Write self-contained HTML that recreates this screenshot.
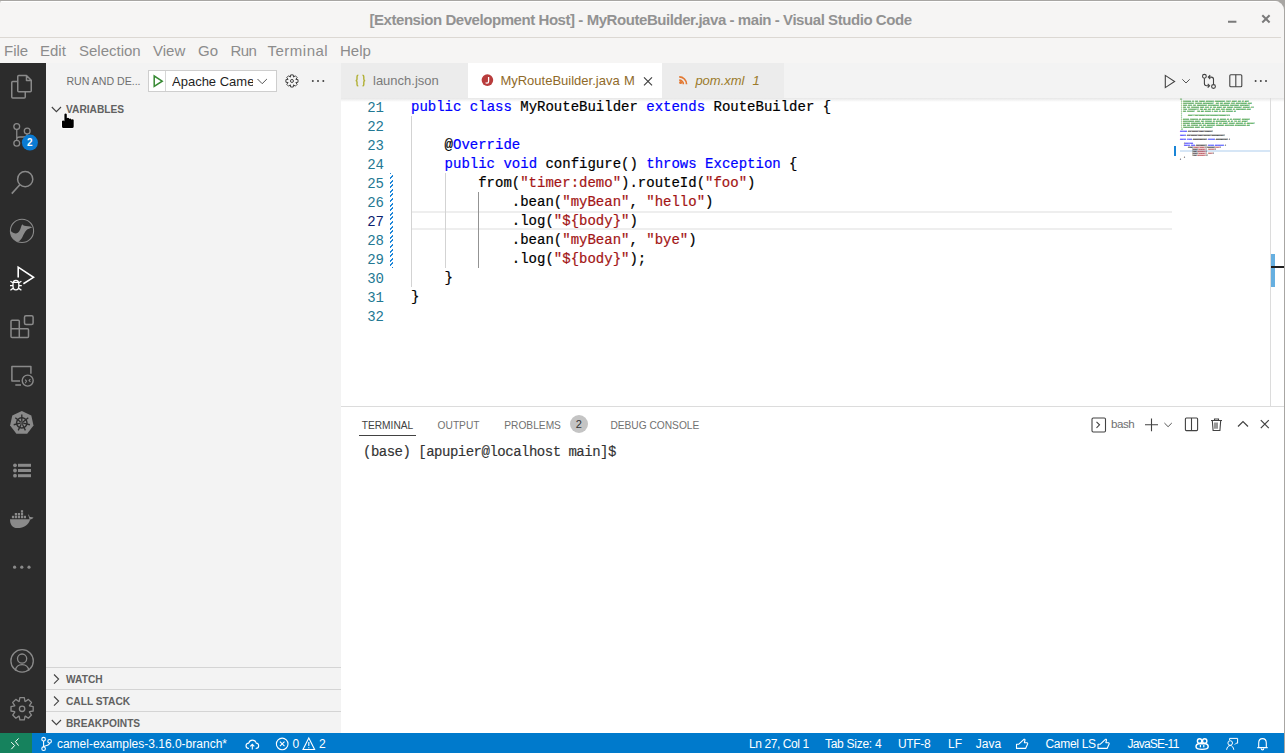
<!DOCTYPE html>
<html><head><meta charset="utf-8">
<style>
*{box-sizing:border-box;margin:0;padding:0}
html,body{width:1285px;height:753px;overflow:hidden;background:#a8a6a3}
body{font-family:"Liberation Sans",sans-serif;position:relative}
.a{position:absolute}
svg{position:absolute;overflow:visible}
#win{left:0;top:1px;width:1284px;height:752px;background:#f6f5f4;border-radius:2px 9px 0 0;overflow:hidden}
#title{left:0;top:0;width:1281px;height:37px;border-bottom:1px solid #dcd8d3;text-align:center;color:#929292;font-weight:bold;font-size:15px;letter-spacing:-0.44px;line-height:37px}
#menu{left:0;top:37px;width:1285px;height:25px;color:#8c8c8c;font-size:15px}
#menu span{position:absolute;top:4px;white-space:nowrap}
#act{left:0;top:62px;width:46px;height:670px;background:#2c2c2c}
#side{left:46px;top:62px;width:295px;height:670px;background:#f3f3f3}
#tabs{left:341px;top:62px;width:944px;height:35px;background:#f3f3f3}
#editor{left:341px;top:97px;width:944px;height:309px;background:#fff;overflow:hidden}
#panel{left:341px;top:405px;width:944px;height:327px;background:#fff;border-top:1px solid #dcdcdc}
#status{left:0;top:732px;width:1285px;height:20px;background:#007acc;color:#fff;font-size:12px}
#status span{position:absolute;top:3px;white-space:nowrap}
.code{font-family:"Liberation Mono",monospace;font-size:14px;line-height:19px;white-space:pre;color:#000;-webkit-text-stroke:0.2px currentColor}
.ln{position:absolute;left:0;width:43px;text-align:right;color:#237893;font-family:"Liberation Mono",monospace;font-size:14px;line-height:19px}
.k{color:#0000ff}
.s{color:#a31515}
.hd{font-size:10.2px;font-weight:bold;color:#616161;position:absolute;left:20px;white-space:nowrap}
.sec{position:absolute;left:0;width:295px;height:22px;border-top:1px solid #d4d4d4}
.tab{position:absolute;top:0;height:35px;font-size:13px;line-height:35px;white-space:nowrap}
.ptab{position:absolute;top:11px;font-size:10.2px;color:#717171;white-space:nowrap}
</style></head><body>
<div id="win" class="a">
  <div class="a" style="left:0;top:0;width:1284px;height:1px;background:#fff"></div>
  <div id="title" class="a">[Extension Development Host] - MyRouteBuilder.java - main - Visual Studio Code</div>
  <!-- window controls -->
  <svg style="left:0;top:0" width="1284" height="37" viewBox="0 1 1284 37"><path d="M1228 21.7h8.4" stroke="#7a7a7a" stroke-width="2"/><path d="M1262.3 15.2l7.3 7.3M1269.6 15.2l-7.3 7.3" stroke="#7a7a7a" stroke-width="2"/></svg>
  <div id="menu" class="a">
    <span style="left:4px">File</span><span style="left:40px">Edit</span><span style="left:79px">Selection</span><span style="left:153px">View</span><span style="left:198px">Go</span><span style="left:230.5px;letter-spacing:-0.6px">Run</span><span style="left:267.5px;letter-spacing:0.5px">Terminal</span><span style="left:340px">Help</span>
  </div>

  <div id="act" class="a">
   <svg style="left:0;top:0" width="46" height="670" viewBox="0 63 46 670">
    <g fill="none" stroke="#8a8a8a" stroke-width="1.5" stroke-linejoin="round">
     <!-- explorer -->
     <path d="M17.75 76.5a1 1 0 0 1 1-1H26.5L31.25 80.25V90.75a1 1 0 0 1-1 1H18.75a1 1 0 0 1-1-1Z M26.5 75.5V80.5H31.25"/>
     <path d="M17.75 81.5H12.75a1 1 0 0 0-1 1V97a1 1 0 0 0 1 1H24.25a1 1 0 0 0 1-1V92"/>
     <!-- scm -->
     <circle cx="16.75" cy="126.6" r="2.9" stroke-width="1.3"/>
     <circle cx="27.2" cy="131.1" r="2.9" stroke-width="1.3"/>
     <circle cx="16.75" cy="143.3" r="2.9" stroke-width="1.3"/>
     <path d="M16.75 129.5V140.4 M16.75 139C16.75 137.5 18 137 20 137H23C25.5 137 27.2 136 27.2 134" stroke-width="1.3"/>
     <!-- search -->
     <circle cx="25.2" cy="179.2" r="7.6" stroke-width="1.5"/>
     <path d="M19.8 184.8L11.8 193.6" stroke-width="1.6"/>
     <!-- camel -->
     <circle cx="22" cy="230.9" r="11.6" stroke-width="1.1"/>
     <!-- extensions -->
     <path d="M12 320.3H18.3Q19.3 320.3 19.3 321.3V328.7H27.5Q28.5 328.7 28.5 329.7V336.6Q28.5 337.6 27.5 337.6H12Q11 337.6 11 336.6V321.3Q11 320.3 12 320.3Z M11 328.7H19.3V337.6"/>
     <rect x="24.5" y="315.8" width="8.6" height="8.8" rx="1.5"/>
     <!-- remote -->
     <path d="M30.9 373.8V366.4H11.9V381H20 M15.3 384.9H21"/>
     <circle cx="27.7" cy="380.6" r="5.5" stroke-width="1.4"/>
     <path d="M25.2 379.6l1.3 1.6-1.3 2 M30.4 379.2l-1.4 1.2 1.4 1.4" stroke-width="1.1"/>
     <!-- account -->
     <circle cx="22.1" cy="660.9" r="11.2" stroke-width="1.3"/>
     <circle cx="22.1" cy="658.6" r="4.6" stroke-width="1.3"/>
     <path d="M15.3 670.6C16 666.5 18.8 664.6 22.1 664.6S28.2 666.5 28.9 670.6" stroke-width="1.3"/>
     <!-- gear -->
     <path d="M29.56 705.90 L33.18 706.60 L33.18 711.00 L29.56 711.70 L29.42 712.02 L31.49 715.08 L28.38 718.19 L25.32 716.12 L25.00 716.26 L24.30 719.88 L19.90 719.88 L19.20 716.26 L18.88 716.12 L15.82 718.19 L12.71 715.08 L14.78 712.02 L14.64 711.70 L11.02 711.00 L11.02 706.60 L14.64 705.90 L14.78 705.58 L12.71 702.52 L15.82 699.41 L18.88 701.48 L19.20 701.34 L19.90 697.72 L24.30 697.72 L25.00 701.34 L25.32 701.48 L28.38 699.41 L31.49 702.52 L29.42 705.58 Z" stroke-width="1.3"/>
     <circle cx="22.1" cy="708.8" r="2.7" stroke-width="1.3"/>
    </g>
    <!-- camel fill -->
    <path fill="#8a8a8a" d="M10.4 230C11 231.8 13 233.4 15.5 233.4C17.5 233.4 19 232.5 20.2 229.5C21 227.5 21.4 225.5 22.3 224.3L23.2 225.3C24.5 226 27 226.3 30.4 226.6L32.3 227.5C30 228.2 27.8 228.9 26.4 230.3C24.6 232.3 23.6 234.6 22.6 236.8C21.6 238.8 20.2 240.6 18.3 241.8C15 241 12.5 238.6 11.2 235.5C10.6 233.8 10.4 232 10.4 230Z"/>
    <!-- debug (active) -->
    <g fill="none" stroke="#fff" stroke-width="1.6" stroke-linejoin="miter">
     <path d="M18.2 277.6V267.2L33.5 277.35L23.4 283.7"/>
     <path d="M13 284a2.9 3.6 0 0 1 5.8 0v2.2a2.9 3.6 0 0 1-5.8 0z M13 282.3H18.8 M10.4 281.2l2.6 1.6 M21.4 281.2l-2.6 1.6 M10 285.6h3 M21.8 285.6h-3 M10.4 290.2l2.6-1.8 M21.4 290.2l-2.6-1.8" stroke-width="1.3"/>
    </g>
    <!-- kubernetes -->
    <path fill="#8a8a8a" d="M21.8 411L31.3 415.5L33.5 425.4L27.2 433.8H16.4L10.1 425.4L12.3 415.5Z"/>
    <g stroke="#2c2c2c" fill="none">
     <circle cx="21.8" cy="422.9" r="5.2" stroke-width="1.5"/>
     <path d="M21.80 421.40L21.80 414.60M22.97 421.96L28.29 417.73M23.26 423.23L29.89 424.75M22.45 424.25L25.40 430.38M21.15 424.25L18.20 430.38M20.34 423.23L13.71 424.75M20.63 421.96L15.31 417.73" stroke-width="1.3"/>
    </g>
    <circle cx="21.8" cy="422.9" r="1.3" fill="#2c2c2c"/><circle cx="21.8" cy="422.9" r="0.6" fill="#8a8a8a"/>
    <!-- list -->
    <g fill="#8a8a8a">
     <circle cx="15" cy="465.3" r="1.9"/><circle cx="15" cy="470.5" r="1.9"/><circle cx="15" cy="475.7" r="1.9"/>
     <rect x="18" y="463.8" width="13" height="3"/><rect x="18" y="469" width="13" height="3"/><rect x="18" y="474.2" width="13" height="3"/>
    </g>
    <!-- docker -->
    <g fill="#8a8a8a">
     <path d="M10 519.2H30.2C28.7 524.5 24 528.1 17.3 528.1C12.5 528.1 10 524.5 10 519.2Z"/>
     <path d="M28 514.2C29 514.9 29.6 516 29.8 517C31 516.8 32.5 516.9 33.5 517.6C32.5 519 31 519.6 29.6 519.6Z"/>
     <rect x="11.9" y="515.8" width="2.2" height="2.4"/><rect x="14.8" y="515.8" width="2.2" height="2.4"/><rect x="17.8" y="515.8" width="2.2" height="2.4"/><rect x="20.9" y="515.8" width="2.2" height="2.4"/><rect x="23.8" y="515.8" width="2.2" height="2.4"/>
     <rect x="14.8" y="513" width="2.2" height="2.4"/><rect x="17.8" y="513" width="2.2" height="2.4"/><rect x="20.9" y="513" width="2.2" height="2.4"/>
     <rect x="20.9" y="510.2" width="2.2" height="2.4"/>
    </g>
    <!-- dots -->
    <g fill="#8a8a8a"><circle cx="14.6" cy="567.2" r="1.6"/><circle cx="21.8" cy="567.2" r="1.6"/><circle cx="29" cy="567.2" r="1.6"/></g>
    <!-- scm badge -->
    <circle cx="29.9" cy="142.6" r="8" fill="#0a7bd3"/>
    <text x="29.9" y="146.1" fill="#fff" font-size="10" font-weight="bold" text-anchor="middle" font-family="Liberation Sans">2</text>
   </svg>
  </div>

  <div id="side" class="a">
   <div class="a" style="left:20.4px;top:12.9px;font-size:10.6px;line-height:1;color:#6f6f6f;white-space:nowrap">RUN AND DE...</div>
   <div class="a" style="left:102px;top:7px;width:129px;height:22px;background:#fff;border:1px solid #cecece"></div>
   <div class="a" style="left:119px;top:8px;width:1px;height:20px;background:#d6d6d6"></div>
   <div class="a" style="left:126px;top:11.8px;width:81px;height:16px;overflow:hidden;font-size:13px;line-height:1;color:#1f1f1f;white-space:nowrap">Apache Camel</div>
   <svg style="left:0;top:0" width="295" height="670" viewBox="46 63 295 670">
    <path d="M154.2 76v10.4l8-5.2z" fill="none" stroke="#388a34" stroke-width="1.5" stroke-linejoin="miter"/>
    <path d="M257.5 79l4.7 4.7 4.7-4.7" fill="none" stroke="#555" stroke-width="1"/>
    <path d="M295.84 79.36 L298.02 79.66 L298.02 82.26 L295.84 82.56 L295.84 82.57 L297.17 84.33 L295.33 86.17 L293.57 84.84 L293.56 84.84 L293.26 87.02 L290.66 87.02 L290.36 84.84 L290.35 84.84 L288.59 86.17 L286.75 84.33 L288.08 82.57 L288.08 82.56 L285.90 82.26 L285.90 79.66 L288.08 79.36 L288.08 79.35 L286.75 77.59 L288.59 75.75 L290.35 77.08 L290.36 77.08 L290.66 74.90 L293.26 74.90 L293.56 77.08 L293.57 77.08 L295.33 75.75 L297.17 77.59 L295.84 79.35 Z" fill="none" stroke="#424242" stroke-width="1"/>
    <circle cx="291.96" cy="80.96" r="1.5" fill="none" stroke="#424242" stroke-width="1"/>
    <g fill="#424242"><circle cx="312.8" cy="80.9" r="1"/><circle cx="318" cy="80.9" r="1"/><circle cx="323.3" cy="80.9" r="1"/></g>
    <!-- chevrons -->
    <path d="M51.8 107l4.6 4.6 4.6-4.6" fill="none" stroke="#424242" stroke-width="1.1"/>
    <path d="M54 674.5l4.6 4.6-4.6 4.6 M54 696.5l4.6 4.6-4.6 4.6" fill="none" stroke="#424242" stroke-width="1.1"/>
    <path d="M51.8 720l4.6 4.6 4.6-4.6" fill="none" stroke="#424242" stroke-width="1.1"/>
    <!-- hand cursor -->
    <path d="M64.4 114.5q0-1 1.2-1 1.2 0 1.2 1V118.3q0-0.6 1.1-0.6 1.1 0 1.1 0.6V119q0-0.6 1.1-0.6 1.1 0 1.1 0.6V119.8q0-0.6 1.2-0.6 1.3 0 1.3 0.8V126.5q0 1.5-1.5 1.5H63.5q-1.5 0-1.5-1.5V121.5q0-1 1.1-1 1.3 0 1.3 1Z" fill="#000" stroke="#fff" stroke-width="1.6" paint-order="stroke"/>
   </svg>
   <div class="hd" style="top:42px;line-height:1">VARIABLES</div>
   <div class="a" style="left:0;top:604px;width:295px;height:1px;background:#d4d4d4"></div>
   <div class="a" style="left:0;top:626px;width:295px;height:1px;background:#d4d4d4"></div>
   <div class="a" style="left:0;top:648px;width:295px;height:1px;background:#d4d4d4"></div>
   <div class="hd" style="top:612.2px;line-height:1">WATCH</div>
   <div class="hd" style="top:634.3px;line-height:1">CALL STACK</div>
   <div class="hd" style="top:656.2px;line-height:1">BREAKPOINTS</div>
  </div>

  <div id="tabs" class="a">
   <div class="tab" style="left:0;width:127px;background:#ececec"></div>
   <div class="tab" style="left:127px;width:194px;background:#fff"></div>
   <div class="tab" style="left:321px;width:122px;background:#ececec"></div>
   
   <div class="a" style="left:32px;top:11px;font-size:13px;line-height:1;color:#7a7a7a;white-space:nowrap">launch.json</div>
   <svg style="left:0;top:0" width="944" height="35" viewBox="341 63 944 35">
    <path d="M358.3 75.3Q357 75.3 357 76.8V79.3Q357 80.6 355.6 80.6Q357 80.6 357 81.9V84.4Q357 85.9 358.3 85.9 M362.5 75.3Q363.8 75.3 363.8 76.8V79.3Q363.8 80.6 365.2 80.6Q363.8 80.6 363.8 81.9V84.4Q363.8 85.9 362.5 85.9" fill="none" stroke="#b1b034" stroke-width="1.4"/>
    <circle cx="487.4" cy="80.1" r="5.8" fill="#b83c3c"/>
    <path d="M488.6 77v4.2c0 1.3-0.7 1.9-1.7 1.9-0.6 0-1-0.2-1.3-0.5" fill="none" stroke="#fff" stroke-width="1.3"/>
    <path d="M644 77.3l8 8 M652 77.3l-8 8" stroke="#424242" stroke-width="1.2"/>
    <g fill="#e37933">
     <circle cx="680.6" cy="82.6" r="1.5"/>
     <path d="M679.2 79.2a5 5 0 0 1 5 5h-1.7a3.3 3.3 0 0 0-3.3-3.3z"/>
     <path d="M679.2 76a8.2 8.2 0 0 1 8.2 8.2h-1.7a6.5 6.5 0 0 0-6.5-6.5z"/>
    </g>
    <!-- right toolbar -->
    <g fill="none" stroke="#424242" stroke-width="1.1" stroke-linejoin="miter">
     <path d="M1165.3 75.4v12.2l9.3-6.1z"/>
     <path d="M1182.3 79.3l3.7 3.7 3.7-3.7" stroke-width="0.9"/>
     <circle cx="1204.4" cy="76.3" r="1.9"/>
     <circle cx="1213.5" cy="86.5" r="1.9"/>
     <path d="M1204.4 78.2v5.3c0 1.4 0.8 2.2 2.2 2.2h2 M1207.7 83.8l1.9 1.9-1.9 1.9 M1213.5 84.6v-5.3c0-1.4-0.8-2.2-2.2-2.2h-2 M1210.2 75.2l-1.9 1.9 1.9 1.9"/>
     <rect x="1229.8" y="74.7" width="12" height="12" rx="1"/>
     <path d="M1235.8 74.7v12"/>
    </g>
    <g fill="#424242"><circle cx="1255.6" cy="80.9" r="1"/><circle cx="1260.8" cy="80.9" r="1"/><circle cx="1266" cy="80.9" r="1"/></g>
   </svg>
   <div class="a" style="left:159.4px;top:11px;font-size:13px;line-height:1;color:#8f6a2a;white-space:nowrap">MyRouteBuilder.java</div>
   <div class="a" style="left:283px;top:11px;font-size:13px;line-height:1;color:#8f6a2a;white-space:nowrap">M</div>
   <div class="a" style="left:354.4px;top:11px;font-size:13px;line-height:1;color:#9b7a2a;font-style:italic;white-space:nowrap">pom.xml</div>
   <div class="a" style="left:411.6px;top:11px;font-size:13px;line-height:1;color:#9b7a2a;font-style:italic;white-space:nowrap">1</div>
  </div>

  <div id="editor" class="a">
   <div class="a" style="left:71px;top:113px;width:760px;height:19px;border-top:2px solid #eeeeee;border-bottom:2px solid #eeeeee"></div>
   <div class="a" style="left:0;top:0;width:1172px;height:4px;background:linear-gradient(#e6e6e6,rgba(255,255,255,0))"></div>
   <div class="a" style="left:70px;top:18px;width:1px;height:171px;background:#d3d3d3"></div>
   <div class="a" style="left:104px;top:75px;width:1px;height:95px;background:#d3d3d3"></div>
   <div class="a" style="left:137px;top:94px;width:1px;height:76px;background:#939393"></div>
   <div class="a" style="left:49px;top:75px;width:3px;height:95px;background:repeating-linear-gradient(135deg,#1f87d9 0 1.35px,rgba(255,255,255,0) 1.35px 3.25px)"></div>
   <div class="a" style="left:0;top:0.6px">
    <div class="ln" style="top:0">21</div>
    <div class="ln" style="top:19px">22</div>
    <div class="ln" style="top:38px">23</div>
    <div class="ln" style="top:57px">24</div>
    <div class="ln" style="top:76px">25</div>
    <div class="ln" style="top:95px">26</div>
    <div class="ln" style="top:114px;color:#0b216f">27</div>
    <div class="ln" style="top:133px">28</div>
    <div class="ln" style="top:152px">29</div>
    <div class="ln" style="top:171px">30</div>
    <div class="ln" style="top:190px">31</div>
    <div class="ln" style="top:209px">32</div>
    <div class="a code" style="left:70px;top:-1px"><span class="k">public</span> <span class="k">class</span> MyRouteBuilder <span class="k">extends</span> RouteBuilder {

    @<span class="k">Override</span>
    <span class="k">public</span> <span class="k">void</span> configure() <span class="k">throws</span> <span class="k">Exception</span> {
        from(<span class="s">"timer:demo"</span>).routeId(<span class="s">"foo"</span>)
            .bean(<span class="s">"myBean"</span>, <span class="s">"hello"</span>)
            .log(<span class="s">"${body}"</span>)
            .bean(<span class="s">"myBean"</span>, <span class="s">"bye"</span>)
            .log(<span class="s">"${body}"</span>);
    }
}
</div>
   </div>
   <!-- minimap -->
   <svg style="left:0;top:0" width="944" height="308" viewBox="341 98 944 308">
    <rect x="1180" y="150" width="91" height="2" fill="#d6e6f6"/>
    <rect x="1174" y="146" width="2" height="10" fill="#1a85d6"/>
    <g opacity="0.3">
<rect x="1180" y="98.3" width="2" height="1.4" fill="#008000"/>
<rect x="1181" y="100.3" width="1" height="1.4" fill="#008000"/>
<rect x="1183" y="100.3" width="8" height="1.4" fill="#008000"/>
<rect x="1192" y="100.3" width="2" height="1.4" fill="#008000"/>
<rect x="1195" y="100.3" width="3" height="1.4" fill="#008000"/>
<rect x="1199" y="100.3" width="6" height="1.4" fill="#008000"/>
<rect x="1206" y="100.3" width="8" height="1.4" fill="#008000"/>
<rect x="1215" y="100.3" width="10" height="1.4" fill="#008000"/>
<rect x="1226" y="100.3" width="5" height="1.4" fill="#008000"/>
<rect x="1232" y="100.3" width="5" height="1.4" fill="#008000"/>
<rect x="1238" y="100.3" width="3" height="1.4" fill="#008000"/>
<rect x="1242" y="100.3" width="2" height="1.4" fill="#008000"/>
<rect x="1245" y="100.3" width="4" height="1.4" fill="#008000"/>
<rect x="1181" y="102.3" width="1" height="1.4" fill="#008000"/>
<rect x="1183" y="102.3" width="11" height="1.4" fill="#008000"/>
<rect x="1195" y="102.3" width="7" height="1.4" fill="#008000"/>
<rect x="1203" y="102.3" width="11" height="1.4" fill="#008000"/>
<rect x="1216" y="102.3" width="3" height="1.4" fill="#008000"/>
<rect x="1220" y="102.3" width="3" height="1.4" fill="#008000"/>
<rect x="1224" y="102.3" width="6" height="1.4" fill="#008000"/>
<rect x="1231" y="102.3" width="4" height="1.4" fill="#008000"/>
<rect x="1236" y="102.3" width="11" height="1.4" fill="#008000"/>
<rect x="1248" y="102.3" width="4" height="1.4" fill="#008000"/>
<rect x="1181" y="104.3" width="1" height="1.4" fill="#008000"/>
<rect x="1183" y="104.3" width="4" height="1.4" fill="#008000"/>
<rect x="1188" y="104.3" width="4" height="1.4" fill="#008000"/>
<rect x="1193" y="104.3" width="3" height="1.4" fill="#008000"/>
<rect x="1197" y="104.3" width="10" height="1.4" fill="#008000"/>
<rect x="1208" y="104.3" width="11" height="1.4" fill="#008000"/>
<rect x="1220" y="104.3" width="9" height="1.4" fill="#008000"/>
<rect x="1230" y="104.3" width="9" height="1.4" fill="#008000"/>
<rect x="1240" y="104.3" width="10" height="1.4" fill="#008000"/>
<rect x="1181" y="106.3" width="1" height="1.4" fill="#008000"/>
<rect x="1183" y="106.3" width="3" height="1.4" fill="#008000"/>
<rect x="1187" y="106.3" width="3" height="1.4" fill="#008000"/>
<rect x="1191" y="106.3" width="8" height="1.4" fill="#008000"/>
<rect x="1200" y="106.3" width="4" height="1.4" fill="#008000"/>
<rect x="1205" y="106.3" width="4" height="1.4" fill="#008000"/>
<rect x="1210" y="106.3" width="2" height="1.4" fill="#008000"/>
<rect x="1213" y="106.3" width="3" height="1.4" fill="#008000"/>
<rect x="1217" y="106.3" width="5" height="1.4" fill="#008000"/>
<rect x="1223" y="106.3" width="3" height="1.4" fill="#008000"/>
<rect x="1227" y="106.3" width="6" height="1.4" fill="#008000"/>
<rect x="1234" y="106.3" width="8" height="1.4" fill="#008000"/>
<rect x="1243" y="106.3" width="7" height="1.4" fill="#008000"/>
<rect x="1251" y="106.3" width="3" height="1.4" fill="#008000"/>
<rect x="1181" y="108.3" width="1" height="1.4" fill="#008000"/>
<rect x="1183" y="108.3" width="4" height="1.4" fill="#008000"/>
<rect x="1188" y="108.3" width="11" height="1.4" fill="#008000"/>
<rect x="1200" y="108.3" width="3" height="1.4" fill="#008000"/>
<rect x="1204" y="108.3" width="3" height="1.4" fill="#008000"/>
<rect x="1208" y="108.3" width="3" height="1.4" fill="#008000"/>
<rect x="1212" y="108.3" width="3" height="1.4" fill="#008000"/>
<rect x="1216" y="108.3" width="4" height="1.4" fill="#008000"/>
<rect x="1221" y="108.3" width="4" height="1.4" fill="#008000"/>
<rect x="1226" y="108.3" width="6" height="1.4" fill="#008000"/>
<rect x="1233" y="108.3" width="2" height="1.4" fill="#008000"/>
<rect x="1236" y="108.3" width="10" height="1.4" fill="#008000"/>
<rect x="1247" y="108.3" width="4" height="1.4" fill="#008000"/>
<rect x="1181" y="110.3" width="1" height="1.4" fill="#008000"/>
<rect x="1183" y="110.3" width="3" height="1.4" fill="#008000"/>
<rect x="1187" y="110.3" width="8" height="1.4" fill="#008000"/>
<rect x="1197" y="110.3" width="3" height="1.4" fill="#008000"/>
<rect x="1201" y="110.3" width="3" height="1.4" fill="#008000"/>
<rect x="1205" y="110.3" width="6" height="1.4" fill="#008000"/>
<rect x="1212" y="110.3" width="1" height="1.4" fill="#008000"/>
<rect x="1214" y="110.3" width="4" height="1.4" fill="#008000"/>
<rect x="1219" y="110.3" width="2" height="1.4" fill="#008000"/>
<rect x="1222" y="110.3" width="3" height="1.4" fill="#008000"/>
<rect x="1226" y="110.3" width="7" height="1.4" fill="#008000"/>
<rect x="1234" y="110.3" width="2" height="1.4" fill="#008000"/>
<rect x="1181" y="112.3" width="1" height="1.4" fill="#008000"/>
<rect x="1181" y="114.3" width="1" height="1.4" fill="#008000"/>
<rect x="1188" y="114.3" width="42" height="1.4" fill="#008000"/>
<rect x="1181" y="116.3" width="1" height="1.4" fill="#008000"/>
<rect x="1181" y="118.3" width="1" height="1.4" fill="#008000"/>
<rect x="1183" y="118.3" width="6" height="1.4" fill="#008000"/>
<rect x="1190" y="118.3" width="8" height="1.4" fill="#008000"/>
<rect x="1199" y="118.3" width="2" height="1.4" fill="#008000"/>
<rect x="1202" y="118.3" width="10" height="1.4" fill="#008000"/>
<rect x="1213" y="118.3" width="3" height="1.4" fill="#008000"/>
<rect x="1217" y="118.3" width="2" height="1.4" fill="#008000"/>
<rect x="1220" y="118.3" width="6" height="1.4" fill="#008000"/>
<rect x="1227" y="118.3" width="2" height="1.4" fill="#008000"/>
<rect x="1230" y="118.3" width="2" height="1.4" fill="#008000"/>
<rect x="1233" y="118.3" width="8" height="1.4" fill="#008000"/>
<rect x="1242" y="118.3" width="8" height="1.4" fill="#008000"/>
<rect x="1181" y="120.3" width="1" height="1.4" fill="#008000"/>
<rect x="1183" y="120.3" width="11" height="1.4" fill="#008000"/>
<rect x="1195" y="120.3" width="5" height="1.4" fill="#008000"/>
<rect x="1201" y="120.3" width="3" height="1.4" fill="#008000"/>
<rect x="1205" y="120.3" width="7" height="1.4" fill="#008000"/>
<rect x="1213" y="120.3" width="2" height="1.4" fill="#008000"/>
<rect x="1216" y="120.3" width="11" height="1.4" fill="#008000"/>
<rect x="1228" y="120.3" width="2" height="1.4" fill="#008000"/>
<rect x="1231" y="120.3" width="2" height="1.4" fill="#008000"/>
<rect x="1234" y="120.3" width="3" height="1.4" fill="#008000"/>
<rect x="1238" y="120.3" width="3" height="1.4" fill="#008000"/>
<rect x="1242" y="120.3" width="6" height="1.4" fill="#008000"/>
<rect x="1181" y="122.3" width="1" height="1.4" fill="#008000"/>
<rect x="1183" y="122.3" width="7" height="1.4" fill="#008000"/>
<rect x="1191" y="122.3" width="10" height="1.4" fill="#008000"/>
<rect x="1202" y="122.3" width="2" height="1.4" fill="#008000"/>
<rect x="1205" y="122.3" width="10" height="1.4" fill="#008000"/>
<rect x="1216" y="122.3" width="2" height="1.4" fill="#008000"/>
<rect x="1219" y="122.3" width="3" height="1.4" fill="#008000"/>
<rect x="1223" y="122.3" width="5" height="1.4" fill="#008000"/>
<rect x="1229" y="122.3" width="6" height="1.4" fill="#008000"/>
<rect x="1236" y="122.3" width="7" height="1.4" fill="#008000"/>
<rect x="1244" y="122.3" width="2" height="1.4" fill="#008000"/>
<rect x="1247" y="122.3" width="8" height="1.4" fill="#008000"/>
<rect x="1181" y="124.3" width="1" height="1.4" fill="#008000"/>
<rect x="1183" y="124.3" width="3" height="1.4" fill="#008000"/>
<rect x="1187" y="124.3" width="3" height="1.4" fill="#008000"/>
<rect x="1191" y="124.3" width="7" height="1.4" fill="#008000"/>
<rect x="1199" y="124.3" width="3" height="1.4" fill="#008000"/>
<rect x="1203" y="124.3" width="3" height="1.4" fill="#008000"/>
<rect x="1207" y="124.3" width="8" height="1.4" fill="#008000"/>
<rect x="1216" y="124.3" width="8" height="1.4" fill="#008000"/>
<rect x="1225" y="124.3" width="9" height="1.4" fill="#008000"/>
<rect x="1235" y="124.3" width="11" height="1.4" fill="#008000"/>
<rect x="1247" y="124.3" width="3" height="1.4" fill="#008000"/>
<rect x="1181" y="126.3" width="1" height="1.4" fill="#008000"/>
<rect x="1183" y="126.3" width="11" height="1.4" fill="#008000"/>
<rect x="1195" y="126.3" width="5" height="1.4" fill="#008000"/>
<rect x="1201" y="126.3" width="3" height="1.4" fill="#008000"/>
<rect x="1205" y="126.3" width="8" height="1.4" fill="#008000"/>
<rect x="1181" y="128.3" width="2" height="1.4" fill="#008000"/>
<rect x="1180" y="130.3" width="7" height="1.4" fill="#0000ff"/>
<rect x="1188" y="130.3" width="25" height="1.4" fill="#000000"/>
<rect x="1180" y="134.3" width="6" height="1.4" fill="#0000ff"/>
<rect x="1187" y="134.3" width="38" height="1.4" fill="#000000"/>
<rect x="1180" y="138.3" width="6" height="1.4" fill="#0000ff"/>
<rect x="1187" y="138.3" width="5" height="1.4" fill="#0000ff"/>
<rect x="1193" y="138.3" width="14" height="1.4" fill="#000000"/>
<rect x="1208" y="138.3" width="7" height="1.4" fill="#0000ff"/>
<rect x="1216" y="138.3" width="12" height="1.4" fill="#000000"/>
<rect x="1229" y="138.3" width="1" height="1.4" fill="#000000"/>
<rect x="1184" y="142.3" width="1" height="1.4" fill="#000000"/>
<rect x="1185" y="142.3" width="8" height="1.4" fill="#0000ff"/>
<rect x="1184" y="144.3" width="6" height="1.4" fill="#0000ff"/>
<rect x="1191" y="144.3" width="4" height="1.4" fill="#0000ff"/>
<rect x="1196" y="144.3" width="11" height="1.4" fill="#000000"/>
<rect x="1208" y="144.3" width="6" height="1.4" fill="#0000ff"/>
<rect x="1215" y="144.3" width="9" height="1.4" fill="#0000ff"/>
<rect x="1225" y="144.3" width="1" height="1.4" fill="#000000"/>
<rect x="1188" y="146.3" width="5" height="1.4" fill="#000000"/>
<rect x="1193" y="146.3" width="12" height="1.4" fill="#a31515"/>
<rect x="1205" y="146.3" width="10" height="1.4" fill="#000000"/>
<rect x="1215" y="146.3" width="5" height="1.4" fill="#a31515"/>
<rect x="1220" y="146.3" width="1" height="1.4" fill="#000000"/>
<rect x="1192" y="148.3" width="6" height="1.4" fill="#000000"/>
<rect x="1198" y="148.3" width="8" height="1.4" fill="#a31515"/>
<rect x="1206" y="148.3" width="1" height="1.4" fill="#000000"/>
<rect x="1208" y="148.3" width="7" height="1.4" fill="#a31515"/>
<rect x="1215" y="148.3" width="1" height="1.4" fill="#000000"/>
<rect x="1192" y="150.3" width="5" height="1.4" fill="#000000"/>
<rect x="1197" y="150.3" width="9" height="1.4" fill="#a31515"/>
<rect x="1206" y="150.3" width="1" height="1.4" fill="#000000"/>
<rect x="1192" y="152.3" width="6" height="1.4" fill="#000000"/>
<rect x="1198" y="152.3" width="8" height="1.4" fill="#a31515"/>
<rect x="1206" y="152.3" width="1" height="1.4" fill="#000000"/>
<rect x="1208" y="152.3" width="5" height="1.4" fill="#a31515"/>
<rect x="1213" y="152.3" width="1" height="1.4" fill="#000000"/>
<rect x="1192" y="154.3" width="5" height="1.4" fill="#000000"/>
<rect x="1197" y="154.3" width="9" height="1.4" fill="#a31515"/>
<rect x="1206" y="154.3" width="2" height="1.4" fill="#000000"/>
<rect x="1184" y="156.3" width="1" height="1.4" fill="#000000"/>
<rect x="1180" y="158.3" width="1" height="1.4" fill="#000000"/>

    </g>
    <g opacity="1">
<g transform="translate(1180 0) scale(0.2 0.28)" font-family="Liberation Mono" font-size="8.333" font-weight="bold" style="white-space:pre">
<text x="0" y="356.4" xml:space="preserve"><tspan fill="#008000">/*</tspan></text>
<text x="0" y="363.6" xml:space="preserve"><tspan fill="#008000"> * Licensed to the Apache Software Foundation (ASF) under one or more</tspan></text>
<text x="0" y="370.7" xml:space="preserve"><tspan fill="#008000"> * contributor license agreements.  See the NOTICE file distributed with</tspan></text>
<text x="0" y="377.9" xml:space="preserve"><tspan fill="#008000"> * this work for additional information regarding copyright ownership.</tspan></text>
<text x="0" y="385.0" xml:space="preserve"><tspan fill="#008000"> * The ASF licenses this file to You under the Apache License, Version 2.0</tspan></text>
<text x="0" y="392.1" xml:space="preserve"><tspan fill="#008000"> * (the &quot;License&quot;); you may not use this file except in compliance with</tspan></text>
<text x="0" y="399.3" xml:space="preserve"><tspan fill="#008000"> * the License.  You may obtain a copy of the License at</tspan></text>
<text x="0" y="406.4" xml:space="preserve"><tspan fill="#008000"> *</tspan></text>
<text x="0" y="413.6" xml:space="preserve"><tspan fill="#008000"> *      hxxp:/-www.apache.org/licenses/LICENSE-2.0</tspan></text>
<text x="0" y="420.7" xml:space="preserve"><tspan fill="#008000"> *</tspan></text>
<text x="0" y="427.9" xml:space="preserve"><tspan fill="#008000"> * Unless required by applicable law or agreed to in writing, software</tspan></text>
<text x="0" y="435.0" xml:space="preserve"><tspan fill="#008000"> * distributed under the License is distributed on an &quot;AS IS&quot; BASIS,</tspan></text>
<text x="0" y="442.1" xml:space="preserve"><tspan fill="#008000"> * WITHOUT WARRANTIES OR CONDITIONS OF ANY KIND, either express or implied.</tspan></text>
<text x="0" y="449.3" xml:space="preserve"><tspan fill="#008000"> * See the License for the specific language governing permissions and</tspan></text>
<text x="0" y="456.4" xml:space="preserve"><tspan fill="#008000"> * limitations under the License.</tspan></text>
<text x="0" y="463.6" xml:space="preserve"><tspan fill="#008000"> */</tspan></text>
<text x="0" y="470.7" xml:space="preserve"><tspan fill="#0000ff">package</tspan><tspan fill="#000000"> org.apache.camel.example;</tspan></text>
<text x="0" y="485.0" xml:space="preserve"><tspan fill="#0000ff">import</tspan><tspan fill="#000000"> org.apache.camel.builder.RouteBuilder;</tspan></text>
<text x="0" y="499.3" xml:space="preserve"><tspan fill="#0000ff">public class</tspan><tspan fill="#000000"> MyRouteBuilder </tspan><tspan fill="#0000ff">extends</tspan><tspan fill="#000000"> RouteBuilder {</tspan></text>
<text x="0" y="513.6" xml:space="preserve"><tspan fill="#000000">    @</tspan><tspan fill="#0000ff">Override</tspan></text>
<text x="0" y="520.7" xml:space="preserve"><tspan fill="#0000ff">    public void</tspan><tspan fill="#000000"> configure() </tspan><tspan fill="#0000ff">throws Exception</tspan><tspan fill="#000000"> {</tspan></text>
<text x="0" y="527.9" xml:space="preserve"><tspan fill="#000000">        from(</tspan><tspan fill="#a31515">&quot;timer:demo&quot;</tspan><tspan fill="#000000">).routeId(</tspan><tspan fill="#a31515">&quot;foo&quot;</tspan><tspan fill="#000000">)</tspan></text>
<text x="0" y="535.0" xml:space="preserve"><tspan fill="#000000">            .bean(</tspan><tspan fill="#a31515">&quot;myBean&quot;</tspan><tspan fill="#000000">, </tspan><tspan fill="#a31515">&quot;hello&quot;</tspan><tspan fill="#000000">)</tspan></text>
<text x="0" y="542.1" xml:space="preserve"><tspan fill="#000000">            .log(</tspan><tspan fill="#a31515">&quot;${body}&quot;</tspan><tspan fill="#000000">)</tspan></text>
<text x="0" y="549.3" xml:space="preserve"><tspan fill="#000000">            .bean(</tspan><tspan fill="#a31515">&quot;myBean&quot;</tspan><tspan fill="#000000">, </tspan><tspan fill="#a31515">&quot;bye&quot;</tspan><tspan fill="#000000">)</tspan></text>
<text x="0" y="556.4" xml:space="preserve"><tspan fill="#000000">            .log(</tspan><tspan fill="#a31515">&quot;${body}&quot;</tspan><tspan fill="#000000">);</tspan></text>
<text x="0" y="563.6" xml:space="preserve"><tspan fill="#000000">    }</tspan></text>
<text x="0" y="570.7" xml:space="preserve"><tspan fill="#000000">}</tspan></text>
</g>

    </g>
    <rect x="1270" y="98" width="1" height="308" fill="#dcdcdc"/>
    <rect x="1271" y="254" width="4" height="33" fill="#66afe0"/>
    <rect x="1271" y="266" width="13" height="2" fill="#1e1e1e"/>
    <rect x="1284" y="98" width="1" height="308" fill="#d4d4d4"/>
   </svg>
  </div>


  <div id="panel" class="a">
   <div class="ptab" style="left:20.7px;top:13.7px;line-height:1;color:#424242">TERMINAL</div>
   <div class="a" style="left:18px;top:28px;width:57px;height:1px;background:#424242"></div>
   <div class="ptab" style="left:96.6px;top:13.7px;line-height:1">OUTPUT</div>
   <div class="ptab" style="left:163.3px;top:13.7px;line-height:1">PROBLEMS</div>
   <div class="a" style="left:228.8px;top:8px;width:18px;height:18px;border-radius:9px;background:#c4c4c4;color:#333;font-size:11px;line-height:18px;text-align:center">2</div>
   <div class="ptab" style="left:269.4px;top:13.7px;line-height:1">DEBUG CONSOLE</div>
   <div class="a" style="left:22px;top:38.2px;letter-spacing:-0.5px;font-family:'Liberation Mono',monospace;font-size:14px;-webkit-text-stroke:0.15px currentColor;line-height:1;color:#333;white-space:pre">(base) [apupier@localhost main]$</div>
   <div class="a" style="left:770px;top:11.2px;font-size:11.6px;line-height:1;color:#6f6f6f;white-space:nowrap;letter-spacing:-0.5px">bash</div>
   <svg style="left:0;top:-1px" width="944" height="327" viewBox="341 406 944 327">
    <g fill="none" stroke="#424242" stroke-width="1.1">
     <rect x="1092" y="418" width="13.5" height="14" rx="1.2"/>
     <path d="M1096.5 421.8l3 3-3 3"/>
     <path d="M1151.5 418.4v12.8 M1145 424.8h13"/>
     <path d="M1164.4 423l3.7 3.7 3.7-3.7" stroke-width="0.9"/>
     <rect x="1185.4" y="418" width="12.2" height="12.6" rx="1"/>
     <path d="M1191.5 418v12.6"/>
     <path d="M1211 420.5h11 M1214.5 420.5v-1.5h4v1.5 M1212.3 420.5l0.8 10h6.8l0.8-10 M1215 422.5v6.3 M1217 422.5v6.3"/>
     <path d="M1238 426.5l5-5 5 5" stroke-width="1.2"/>
     <path d="M1260.8 420.2l8 8 M1268.8 420.2l-8 8" stroke-width="1.2"/>
    </g>
   </svg>
  </div>


  <div id="status" class="a">
   <div class="a" style="left:0;top:0;width:32px;height:20px;background:#16825d"></div>
   <span style="left:56.9px;top:4.8px;line-height:1">camel-examples-3.16.0-branch*</span>
   <span style="left:292.4px;top:4.8px;line-height:1">0</span>
   <span style="left:319px;top:4.8px;line-height:1">2</span>
   <span style="left:749.1px;top:4.8px;line-height:1;letter-spacing:-0.42px">Ln 27, Col 1</span>
   <span style="left:825px;top:4.8px;line-height:1;letter-spacing:-0.28px">Tab Size: 4</span>
   <span style="left:897.9px;top:4.8px;line-height:1;letter-spacing:-0.3px">UTF-8</span>
   <span style="left:948px;top:4.8px;line-height:1">LF</span>
   <span style="left:975.8px;top:4.8px;line-height:1">Java</span>
   <span style="left:1045.5px;top:4.8px;line-height:1;letter-spacing:-0.3px">Camel LS</span>
   <span style="left:1127.5px;top:4.8px;line-height:1;letter-spacing:-0.75px">JavaSE-11</span>
   <svg style="left:0;top:0" width="1285" height="20" viewBox="0 733 1285 20">
    <g fill="none" stroke="#fff" stroke-width="1.1">
     <path d="M11.2 742.1L14.6 745.5L11.3 749.2 M18.6 738.4L15.4 741.6L18.6 745.6" stroke-width="1"/>
     <circle cx="43.6" cy="739.2" r="1.8"/><circle cx="43.6" cy="748.7" r="1.8"/><circle cx="49.6" cy="741.3" r="1.8"/>
     <path d="M43.6 741v5.9 M49.6 743.1C49.6 745 47.5 745.4 45.8 745.7C44.4 746 43.6 746.4 43.6 747"/>
     <path d="M249 748.5c-1.8 0-3-1.2-3-2.7s1.2-2.6 2.7-2.7c0.5-1.8 2-3 3.8-3s3.3 1.3 3.7 3c1.4 0.1 2.5 1.3 2.5 2.7s-1.2 2.7-3 2.7 M252.3 749.5v-5 M250.3 746.3l2-2 2 2"/>
     <circle cx="282.2" cy="743.9" r="5.8"/>
     <path d="M279.9 741.6l4.6 4.6 M284.5 741.6l-4.6 4.6"/>
     <path d="M308.8 738l5.8 11.5h-11.6z M308.8 742v4 M308.8 747.3v1"/>
     <path d="M1016.5 744.3H1018.6L1023.9 739.3Q1025 739.1 1025 739.8L1024.4 742.7H1027Q1027.9 743 1027.6 744L1025.6 748.4H1016.5Z M1098 744.3H1100.1L1105.4 739.3Q1106.5 739.1 1106.5 739.8L1105.9 742.7H1108.5Q1109.4 743 1109.1 744L1107.1 748.4H1098Z" stroke-width="1.1" stroke-linejoin="round"/>
     <path d="M1226.6 749.8c0.4-2.6 1.8-4.3 3.6-4.3s3.2 1.7 3.6 4.3 M1230.2 745.3a2.3 2.3 0 1 0 0-4.6a2.3 2.3 0 1 0 0 4.6 M1229.6 740V738.4H1237.6V743.2H1236.2L1234.8 744.6" stroke-width="1"/>
     <path d="M1232.1 747.5h3v-4.5c0-2.5 1.8-4.3 3.8-4.3" stroke="none"/>
     <path d="M1257.3 747.6h10.4 M1258.7 747.6v-4.6c0-2.6 1.7-4.4 3.8-4.4s3.8 1.8 3.8 4.4v4.6 M1261.2 748.6a1.3 1.3 0 0 0 2.6 0" stroke-width="1.1"/>
    </g>
    <g fill="none" stroke="#fff" stroke-width="1.4">
     <circle cx="1199.6" cy="741" r="2.2"/><circle cx="1204.7" cy="741" r="2.2"/>
     <path d="M1196 746.8C1196 744.8 1197 744 1198.5 743.7H1205.8C1207.3 744 1208.2 744.8 1208.2 746.8C1208.2 748.6 1205.5 749.4 1202.1 749.4C1198.7 749.4 1196 748.6 1196 746.8Z"/>
    </g>
    <g fill="#fff"><rect x="1199.8" y="745" width="1.2" height="2.3"/><rect x="1203.2" y="745" width="1.2" height="2.3"/></g>
   </svg>
  </div>

</div>
</body></html>
